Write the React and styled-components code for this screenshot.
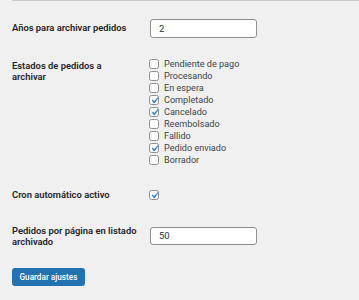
import styled, { createGlobalStyle } from 'styled-components';

const GlobalStyle = createGlobalStyle`
    html, body {
        margin: 0;
        padding: 0;
        background: #f0f0f1;
    }
    body {
        font-family: Roboto, "Liberation Sans", sans-serif;
        color: #1d2327;
        -webkit-font-smoothing: antialiased;
    }
`;

const Page = styled.form`
    padding-left: 12px;
    height: 300px;
    overflow: hidden;
`;

const TopRule = styled.div`
    height: 1px;
    background: #c8c9cc;
`;

const Row = styled.div`
    display: grid;
    grid-template-columns: 138px 1fr;
    align-items: ${p => p.$align || 'start'};
    margin-top: ${p => p.$top}px;
`;

const Label = styled.label`
    width: 132px;
    font-size: 9.4px;
    font-weight: 600;
    line-height: 11.7px;
    padding-top: ${p => p.$offset || 0}px;
`;

const TextInput = styled.input`
    box-sizing: border-box;
    width: 107px;
    height: 18.6px;
    margin: ${p => p.$offset || 0}px 0 0 0;
    padding: 0 8px;
    border: 1px solid #8c8f94;
    border-radius: 3px;
    background: #fff;
    font-family: inherit;
    font-size: 9.5px;
    color: #2c3338;
    outline: none;
`;

const CheckList = styled.div`
    display: flex;
    flex-direction: column;
`;

const CheckRow = styled.label`
    display: flex;
    align-items: center;
    gap: 5px;
    height: 12px;
    font-size: 9.1px;
    color: #3c434a;
    margin-left: -1px;
`;

const Box = styled.span`
    box-sizing: border-box;
    position: relative;
    width: 10px;
    height: 10px;
    border: 1px solid #8c8f94;
    border-radius: 2.5px;
    background: #fff;
    flex-shrink: 0;

    svg {
        position: absolute;
        left: -2px;
        top: -2px;
    }
`;

const SaveButton = styled.button`
    margin-top: 20px;
    height: 18px;
    padding: 0 6.5px;
    border: 1px solid #2271b1;
    border-radius: 2.5px;
    background: #2271b1;
    color: #fff;
    font-family: inherit;
    font-size: 8.2px;
    font-weight: 500;
    cursor: pointer;
`;

function Checkbox({ checked }) {
    return (
        <Box>
            {checked && (
                <svg width="13" height="13" viewBox="0 0 20 20">
                    <path d="M14.83 4.89l1.34.94-5.81 8.38H9.02L5.78 9.67l1.34-1.25 2.57 2.4z" fill="#3582c4" />
                </svg>
            )}
        </Box>
    );
}

const estados = [
    ['Pendiente de pago', false],
    ['Procesando', false],
    ['En espera', false],
    ['Completado', true],
    ['Cancelado', true],
    ['Reembolsado', false],
    ['Fallido', false],
    ['Pedido enviado', true],
    ['Borrador', false],
];

export default function App() {
    return (
        <>
            <GlobalStyle />
            <Page onSubmit={e => e.preventDefault()}>
                <TopRule />

                <Row $top={18} $align="center">
                    <Label>Años para archivar pedidos</Label>
                    <TextInput defaultValue="2" />
                </Row>

                <Row $top={20.5}>
                    <Label $offset={1.5}>Estados de pedidos a<br />archivar</Label>
                    <CheckList>
                        {estados.map(([name, on]) => (
                            <CheckRow key={name}>
                                <Checkbox checked={on} />
                                {name}
                            </CheckRow>
                        ))}
                    </CheckList>
                </Row>

                <Row $top={22.5} $align="center">
                    <Label>Cron automático activo</Label>
                    <CheckRow>
                        <Checkbox checked />
                    </CheckRow>
                </Row>

                <Row $top={24}>
                    <Label>Pedidos por página en listado archivado</Label>
                    <TextInput $offset={2} defaultValue="50" />
                </Row>

                <SaveButton type="submit">Guardar ajustes</SaveButton>
            </Page>
        </>
    );
}
